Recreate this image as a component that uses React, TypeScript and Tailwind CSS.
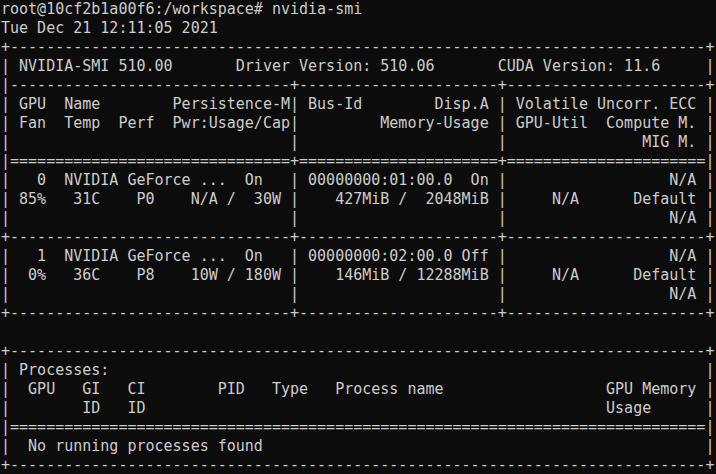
const lines = [
  'root@10cf2b1a00f6:/workspace# nvidia-smi',
  'Tue Dec 21 12:11:05 2021',
  '+-----------------------------------------------------------------------------+',
  '| NVIDIA-SMI 510.00       Driver Version: 510.06       CUDA Version: 11.6     |',
  '|-------------------------------+----------------------+----------------------+',
  '| GPU  Name        Persistence-M| Bus-Id        Disp.A | Volatile Uncorr. ECC |',
  '| Fan  Temp  Perf  Pwr:Usage/Cap|         Memory-Usage | GPU-Util  Compute M. |',
  '|                               |                      |               MIG M. |',
  '|===============================+======================+======================|',
  '|   0  NVIDIA GeForce ...  On   | 00000000:01:00.0  On |                  N/A |',
  '| 85%   31C    P0    N/A /  30W |    427MiB /  2048MiB |     N/A      Default |',
  '|                               |                      |                  N/A |',
  '+-------------------------------+----------------------+----------------------+',
  '|   1  NVIDIA GeForce ...  On   | 00000000:02:00.0 Off |                  N/A |',
  '|  0%   36C    P8    10W / 180W |    146MiB / 12288MiB |     N/A      Default |',
  '|                               |                      |                  N/A |',
  '+-------------------------------+----------------------+----------------------+',
  '',
  '+-----------------------------------------------------------------------------+',
  '| Processes:                                                                  |',
  '|  GPU   GI   CI        PID   Type   Process name                  GPU Memory |',
  '|        ID   ID                                                   Usage      |',
  '|=============================================================================|',
  '|  No running processes found                                                 |',
  '+-----------------------------------------------------------------------------+',
]

export default function App() {
  return (
    <main className="h-[474px] w-[716px] overflow-hidden bg-[#0c0c0c]">
      <pre className="m-0 px-px text-[15px] leading-[19px] text-[#cccccc] font-['DejaVu_Sans_Mono',monospace]">
        {lines.map((line, i) => (
          <div key={i} className="h-[19px] whitespace-pre">
            {line}
          </div>
        ))}
      </pre>
    </main>
  )
}
